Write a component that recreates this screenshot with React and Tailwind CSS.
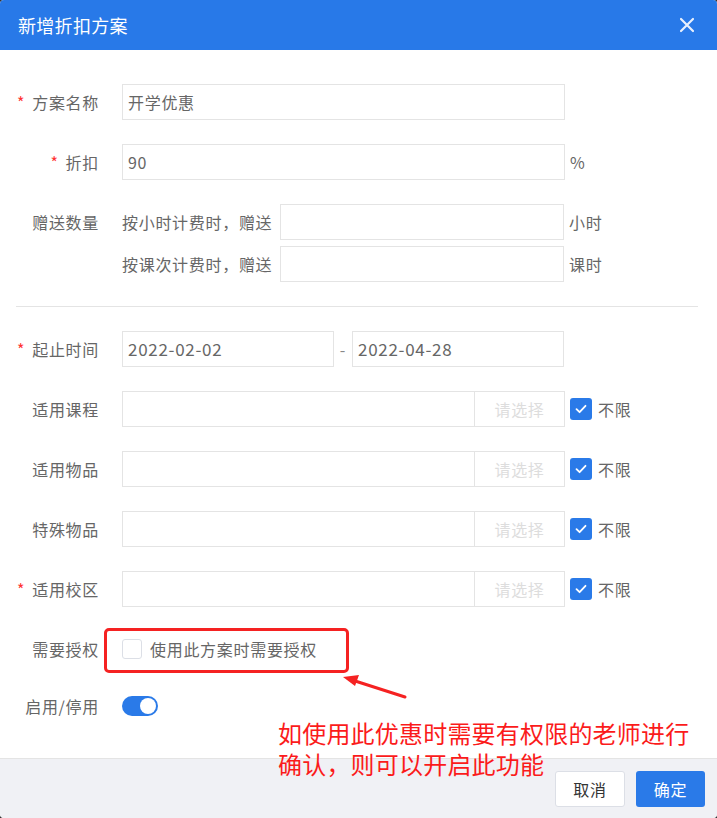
import React from 'react';

const font = { fontFamily: '"Microsoft YaHei", "Noto Sans CJK SC", "Noto Sans", sans-serif' };

function Label({ required, children }) {
  return (
    <div className="w-[83px] mr-[23px] shrink-0 text-right text-[16px] text-[#666] leading-9 whitespace-nowrap">
      {required && <span className="text-[#f33] mr-[7px]">*</span>}
      {children}
    </div>
  );
}

function Check({ checked }) {
  return checked ? (
    <span className="w-[22px] h-[22px] rounded-[3px] bg-[#2a7ae8] flex items-center justify-center">
      <svg width="14" height="14" viewBox="0 0 14 14" fill="none">
        <path d="M2.5 7.2 L5.6 10.2 L11.5 3.8" stroke="white" strokeWidth="1.8" strokeLinecap="round" strokeLinejoin="round" />
      </svg>
    </span>
  ) : (
    <span className="w-5 h-5 rounded-[3px] border border-[#dcdfe6] bg-white" />
  );
}

function SelectRow({ label, required }) {
  return (
    <div className="flex items-center h-9">
      <Label required={required}>{label}</Label>
      <div className="w-[353px] h-9 border border-[#e4e4e4]" />
      <div className="w-[90px] h-9 border border-l-0 border-[#e4e4e4] flex items-center justify-center text-[16px] text-[#ddd]">请选择</div>
      <div className="ml-[5px] flex items-center gap-[6px]">
        <Check checked />
        <span className="text-[16px] text-[#666]">不限</span>
      </div>
    </div>
  );
}

export default function App() {
  return (
    <div className="w-[717px] h-[818px] bg-[#333] tracking-[0.7px]" style={font}>
      <div className="relative w-[717px] h-[818px] rounded-[4px] overflow-hidden bg-white flex flex-col">
        <div className="h-[50px] bg-[#2879e8] flex items-center justify-between pl-[18px] pr-[22px] shrink-0">
          <span className="text-white text-[18px] tracking-[0.3px]">新增折扣方案</span>
          <svg width="16" height="16" viewBox="0 0 16 16">
            <path d="M2 2 L14 14 M14 2 L2 14" stroke="#e8f0fd" strokeWidth="2.2" strokeLinecap="round" />
          </svg>
        </div>

        <div className="flex-1 px-4 pt-[34px]">
          <div className="flex items-center h-9">
            <Label required>方案名称</Label>
            <div className="w-[443px] h-9 border border-[#e4e4e4] px-[5px] flex items-center text-[16px] text-[#666]">开学优惠</div>
          </div>

          <div className="flex items-center h-9 mt-6">
            <Label required>折扣</Label>
            <div className="w-[443px] h-9 border border-[#e4e4e4] px-[5px] flex items-center text-[16px] text-[#666]">90</div>
            <span className="ml-[5px] text-[16px] text-[#666]">%</span>
          </div>

          <div className="flex mt-6">
            <Label>赠送数量</Label>
            <div className="flex flex-col gap-[6px]">
              <div className="flex items-center h-9">
                <span className="w-[158px] text-[16px] text-[#666] whitespace-nowrap">按小时计费时，赠送</span>
                <div className="w-[284px] h-9 border border-[#e4e4e4]" />
                <span className="ml-[5px] text-[16px] text-[#666]">小时</span>
              </div>
              <div className="flex items-center h-9">
                <span className="w-[158px] text-[16px] text-[#666] whitespace-nowrap">按课次计费时，赠送</span>
                <div className="w-[284px] h-9 border border-[#e4e4e4]" />
                <span className="ml-[5px] text-[16px] text-[#666]">课时</span>
              </div>
            </div>
          </div>

          <div className="h-px bg-[#e4e4e4] mt-6 mr-[3px]" />

          <div className="flex items-center h-9 mt-6">
            <Label required>起止时间</Label>
            <div className="w-[212px] h-9 border border-[#e4e4e4] px-[5px] flex items-center text-[17px] text-[#666]">2022-02-02</div>
            <span className="w-[18px] text-center text-[16px] text-[#888]">-</span>
            <div className="w-[212px] h-9 border border-[#e4e4e4] px-[5px] flex items-center text-[17px] text-[#666]">2022-04-28</div>
          </div>

          <div className="flex flex-col gap-6 mt-6">
            <SelectRow label="适用课程" />
            <SelectRow label="适用物品" />
            <SelectRow label="特殊物品" />
            <SelectRow label="适用校区" required />
          </div>

          <div className="flex items-center h-9 mt-6">
            <Label>需要授权</Label>
            <div className="flex items-center gap-2">
              <Check />
              <span className="text-[16px] text-[#666]">使用此方案时需要授权</span>
            </div>
          </div>

          <div className="flex items-center h-[30px] mt-[24px]">
            <Label>启用/停用</Label>
            <div className="w-9 h-5 rounded-full bg-[#2a7ae8] flex items-center justify-end pr-[2px]">
              <span className="w-4 h-4 rounded-full bg-white" />
            </div>
          </div>
        </div>

        <div className="h-[60px] shrink-0 bg-[#f0f1f5] border-t border-[#e4e4e4] flex items-center justify-end gap-[11px] pr-3">
          <button className="w-[70px] h-9 bg-white border border-[#dcdfe6] rounded-[3px] text-[16px] text-[#333]">取消</button>
          <button className="w-[69px] h-9 bg-[#2a7ae8] rounded-[3px] text-[16px] text-white">确定</button>
        </div>

        {/* annotation overlay */}
        <div className="absolute left-[104px] top-[628px] w-[245px] h-[45px] border-[3px] border-[#f52222] rounded-[5px]" />
        <svg className="absolute left-[340px] top-[670px]" width="70" height="32" viewBox="0 0 70 32">
          <path d="M65 27 L12 10" stroke="#f52222" strokeWidth="3" strokeLinecap="round" />
          <path d="M3 7 L19 5 L15 16 Z" fill="#f52222" />
        </svg>
        <div className="absolute left-[278px] top-[717px] text-[24px] leading-[31px] tracking-[0.2px] text-[#fb1b1b] whitespace-nowrap">
          <div>如使用此优惠时需要有权限的老师进行</div>
          <div>确认，则可以开启此功能</div>
        </div>
      </div>
    </div>
  );
}
